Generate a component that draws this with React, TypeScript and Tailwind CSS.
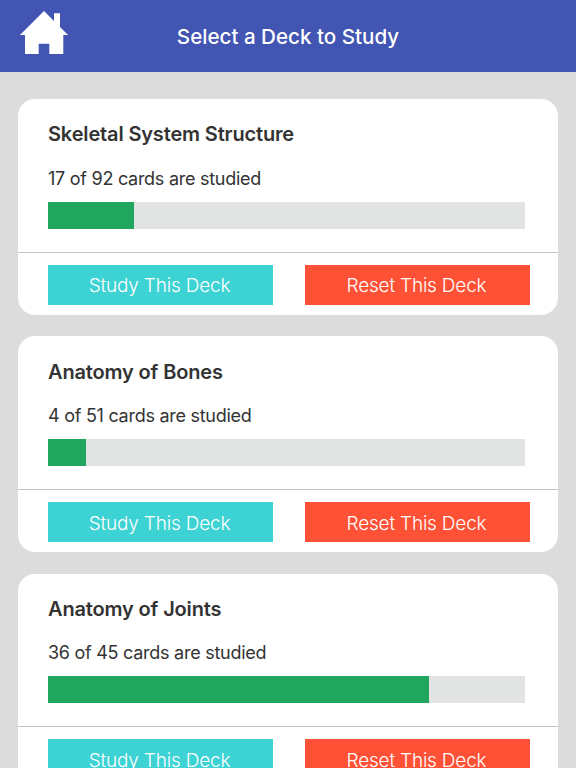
import React from 'react';

const decks = [
  { title: 'Skeletal System Structure', studied: 17, total: 92, bar: 86 },
  { title: 'Anatomy of Bones', studied: 4, total: 51, bar: 38 },
  { title: 'Anatomy of Joints', studied: 36, total: 45, bar: 381 },
];

function HomeIcon() {
  return (
    <svg width="48" height="44" viewBox="0 0 48 44" fill="white">
      <path d="M24 0 L34 10 L34 2.3 L40 2.3 L40 16 L48 24 L43.3 24 L43.3 43 L29.3 43 L29.3 32.7 L18.7 32.7 L18.7 43 L5 43 L5 24 L0 24 Z" />
    </svg>
  );
}

function DeckCard({ title, studied, total, bar }: { title: string; studied: number; total: number; bar: number }) {
  return (
    <div className="bg-white rounded-[17px] shrink-0 h-[216px] overflow-hidden">
      <div className="pl-[30px] pr-[33px] h-[153.6px] border-b border-[#c4c4c4]">
        <h2 className="pt-[22.4px] text-[20px] tracking-[-0.15px] leading-[27px] font-semibold text-[#333333]">{title}</h2>
        <p className="mt-[17.2px] text-[18px] tracking-[-0.27px] leading-[26px] text-[#333333]">
          {studied} of {total} cards are studied
        </p>
        <div className="mt-[10px] h-[27px] bg-[#e2e4e3]">
          <div className="h-full bg-[#20a65f]" style={{ width: bar }}></div>
        </div>
      </div>
      <div className="pl-[30px] pr-[28px] pt-[12px] flex justify-between">
        <button className="w-[225px] h-[40px] pt-[3.6px] pr-[2px] bg-[#3dd2d3] text-white text-[19px] tracking-[-0.2px] font-light">Study This Deck</button>
        <button className="w-[225px] h-[40px] pt-[3.6px] pr-[2px] bg-[#ff5136] text-white text-[19px] tracking-[-0.2px] font-light">Reset This Deck</button>
      </div>
    </div>
  );
}

export default function App() {
  return (
    <div className="w-[576px] h-[768px] overflow-hidden bg-[#dcdcdc] font-['Inter',sans-serif]">
      {/* Header */}
      <div className="relative h-[72px] bg-[#4255b3] flex items-center justify-center">
        <div className="absolute left-[20px] top-[11px]">
          <HomeIcon />
        </div>
        <h1 className="mt-[3px] text-white text-[20.6px] font-medium">Select a Deck to Study</h1>
      </div>

      {/* Deck list */}
      <div className="flex flex-col gap-[21.4px] pt-[27px] px-[18px]">
        {decks.map(deck => (
          <DeckCard key={deck.title} {...deck} />
        ))}
      </div>
    </div>
  );
}
